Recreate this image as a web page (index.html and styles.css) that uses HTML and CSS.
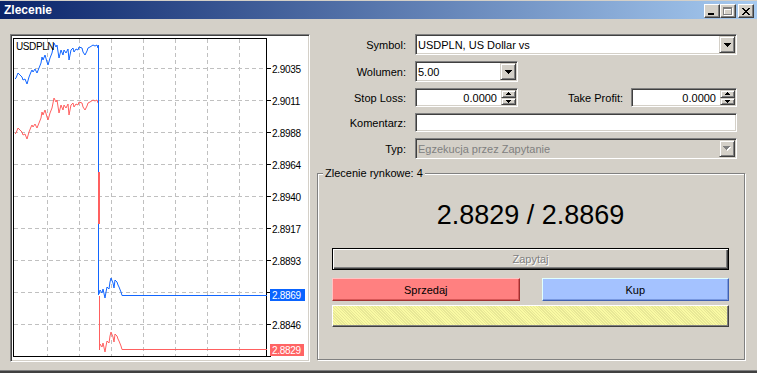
FILE: index.html
```html
<!DOCTYPE html>
<html>
<head>
<meta charset="utf-8">
<link rel="stylesheet" href="styles.css">
</head>
<body>
<div class="window">
  <div class="titlebar">
    <span class="title">Zlecenie</span>
    <div class="tb-buttons">
      <div class="tb-btn"><svg width="6" height="2" class="ico-min"><rect width="6" height="2" fill="#000"/></svg></div>
      <div class="tb-btn"><svg width="10" height="9" viewBox="0 0 10 9" shape-rendering="crispEdges"><path d="M1.5 1.5h8v7h-8z M1.5 2.5h8" fill="none" stroke="#fff"/><path d="M0.5 0.5h8v7h-8z M0.5 1.5h8" fill="none" stroke="#808080"/></svg></div>
      <div class="tb-btn tb-close"><svg width="8" height="7" viewBox="0 0 8 7" shape-rendering="crispEdges"><path d="M0 0h2v1h1v1h2v-1h1v-1h2v1h-1v1h-1v1h-1v1h1v1h1v1h1v1h-2v-1h-1v-1h-2v1h-1v1h-2v-1h1v-1h1v-1h1v-1h-1v-1h-1v-1h-1z" fill="#000"/></svg></div>
    </div>
  </div>
  <div class="content">
    <div class="chart-panel sunken">
      <svg class="chart" width="296" height="324" viewBox="12 36 296 324">
        <rect x="12" y="36" width="296" height="324" fill="#fff"/>
        <g stroke="#c0c0c0" stroke-dasharray="4 3" shape-rendering="crispEdges" fill="none">
          <path d="M47.5 39V356M79.5 39V356M111.5 39V356M143.5 39V356M175.5 39V356M207.5 39V356M239.5 39V356"/>
          <path d="M14 68.5H266M14 100.5H266M14 132.5H266M14 164.5H266M14 196.5H266M14 228.5H266M14 260.5H266M14 292.5H266M14 324.5H266"/>
        </g>
        <rect x="13.5" y="38.5" width="253" height="318" fill="none" stroke="#000" shape-rendering="crispEdges"/>
        <path d="M267 68.5h4M267 100.5h4M267 132.5h4M267 164.5h4M267 196.5h4M267 228.5h4M267 260.5h4M267 292.5h4M267 324.5h4M267 356.5h4" stroke="#000" shape-rendering="crispEdges"/>
        <g class="axis-txt">
          <text x="272" y="72.5">2.9035</text>
          <text x="272" y="104.5">2.9011</text>
          <text x="272" y="136.5">2.8988</text>
          <text x="272" y="168.5">2.8964</text>
          <text x="272" y="200.5">2.8940</text>
          <text x="272" y="232.5">2.8917</text>
          <text x="272" y="264.5">2.8893</text>
          <text x="272" y="328.5">2.8846</text>
        </g>
        <g fill="none" stroke-width="1">
          <g transform="translate(0,55)" stroke="#ff6060">
            <polyline points="15,79 16,78 18,73 20,75 22,77 23,80 25,79 27,84 29,77 31,72 32,70 33,72 35,69 37,73 39,68 41,63 42,57 43,60 45,55 47,62 48,65 50,58 52,53 53,48 54,43 56,47 57,45 59,58 61,50 63,55 64,50 66,53 68,49 69,60 71,50 73,48 74,52 76,49 78,50 79,47 82,48 83,52 85,55 87,51 88,48 90,47 93,45 95,46 97,45 98,48"/>
          </g>
          <g transform="translate(0,54)" stroke="#ff6060">
            <polyline points="99.5,294 100,290 102,293 103,289 105,298 106,292 107,287 109,289 110,282 111,278 113,283 114,288 115,280 117,282 118,285 119,287 121,292 122,295.5 267,295.5"/>
          </g>
          <line x1="99.5" y1="296" x2="99.5" y2="350" stroke="#ff6060"/>
          <polyline stroke="#1266ff" points="15,79 16,78 18,73 20,75 22,77 23,80 25,79 27,84 29,77 31,72 32,70 33,72 35,69 37,73 39,68 41,63 42,57 43,60 45,55 47,62 48,65 50,58 52,53 53,48 54,43 56,47 57,45 59,58 61,50 63,55 64,50 66,53 68,49 69,60 71,50 73,48 74,52 76,49 78,50 79,47 82,48 83,52 85,55 87,51 88,48 90,47 93,45 95,46 97,45 98,48 98.5,45"/>
          <line x1="98.5" y1="45" x2="98.5" y2="295" stroke="#1266ff"/>
          <polyline stroke="#1266ff" points="99,294 100,290 102,293 103,289 105,298 106,292 107,287 109,289 110,282 111,278 113,283 114,288 115,280 117,282 118,285 119,287 121,292 122,295.5 267,295.5"/>
          <rect x="98" y="172" width="2" height="52" fill="#ff6060" stroke="none"/>
        </g>
        <rect x="270" y="289" width="35" height="12" fill="#0a64ff"/>
        <text x="272" y="299" class="axis-txt lbl-white">2.8869</text>
        <rect x="270" y="344" width="34" height="12" fill="#ff6464"/>
        <text x="272" y="354" class="axis-txt lbl-white">2.8829</text>
        <text x="16" y="49.5" class="sym-txt">USDPLN</text>
      </svg>
    </div>
    <div class="form">
      <div class="fields">
        <div class="lbl">Symbol:</div>
        <div class="combo sunken span3"><span class="val">USDPLN, US Dollar vs</span><span class="btn raised"><svg width="7" height="4" shape-rendering="crispEdges"><path d="M0 0h7v1h-1v1h-1v1h-1v1h-1v-1h-1v-1h-1v-1h-1z" fill="#000"/></svg></span></div>

        <div class="lbl">Wolumen:</div>
        <div class="combo sunken"><span class="val">5.00</span><span class="btn raised"><svg width="7" height="4" shape-rendering="crispEdges"><path d="M0 0h7v1h-1v1h-1v1h-1v1h-1v-1h-1v-1h-1v-1h-1z" fill="#000"/></svg></span></div>
        <div></div><div></div>

        <div class="lbl">Stop Loss:</div>
        <div class="spin sunken"><span class="val num">0.0000</span><span class="spinbtns"><span class="sbtn raised"><svg width="5" height="3" shape-rendering="crispEdges"><path d="M2 0h1v1h1v1h1v1h-5v-1h1v-1h1z" fill="#000"/></svg></span><span class="sbtn raised"><svg width="5" height="3" shape-rendering="crispEdges"><path d="M0 0h5v1h-1v1h-1v1h-1v-1h-1v-1h-1z" fill="#000"/></svg></span></span></div>
        <div class="lbl lbl2">Take Profit:</div>
        <div class="spin sunken"><span class="val num">0.0000</span><span class="spinbtns"><span class="sbtn raised"><svg width="5" height="3" shape-rendering="crispEdges"><path d="M2 0h1v1h1v1h1v1h-5v-1h1v-1h1z" fill="#000"/></svg></span><span class="sbtn raised"><svg width="5" height="3" shape-rendering="crispEdges"><path d="M0 0h5v1h-1v1h-1v1h-1v-1h-1v-1h-1z" fill="#000"/></svg></span></span></div>

        <div class="lbl">Komentarz:</div>
        <div class="edit sunken span3"></div>

        <div class="lbl">Typ:</div>
        <div class="combo sunken span3 disabled"><span class="val">Egzekucja przez Zapytanie</span><span class="btn raised"><svg width="8" height="5" shape-rendering="crispEdges"><path d="M1 1h7v1h-1v1h-1v1h-1v1h-1v-1h-1v-1h-1v-1h-1z" fill="#fff"/><path d="M0 0h7v1h-1v1h-1v1h-1v1h-1v-1h-1v-1h-1v-1h-1z" fill="#808080"/></svg></span></div>
      </div>

      <fieldset class="group">
        <legend>Zlecenie rynkowe: 4</legend>
        <div class="price">2.8829 / 2.8869</div>
        <div class="zap"><span>Zapytaj</span></div>
        <div class="trade">
          <div class="sell">Sprzedaj</div>
          <div class="buy">Kup</div>
        </div>
        <div class="yellow"></div>
      </fieldset>
    </div>
  </div>
</div>
</body>
</html>
```
FILE: styles.css
```css
* { box-sizing: border-box; }
body {
  margin: 0;
  background: #d4d0c8;
  font-family: "Liberation Sans", Arial, sans-serif;
  font-size: 11px;
  color: #000;
}
.window {
  width: 757px;
  height: 373px;
  background: #d4d0c8;
  overflow: hidden;
  border-bottom: 2px solid #404040;
  box-shadow: inset 0 -1px #808080;
  border-top: 1px solid #d4d0c8;
}
.titlebar {
  height: 18px;
  background: linear-gradient(to right, #0a246a, #a6caf0);
  display: flex;
  align-items: flex-start;
  padding: 0 3px 0 3px;
}
.title {
  color: #fff;
  font-weight: bold;
  font-size: 12px;
  line-height: 18px;
  padding-left: 1px;
}
.tb-buttons {
  margin-left: auto;
  display: flex;
  padding-top: 3px;
}
.tb-btn {
  width: 16px;
  height: 14px;
  background: #d4d0c8;
  border: 1px solid;
  border-color: #fff #404040 #404040 #fff;
  box-shadow: inset -1px -1px #808080;
  display: flex;
  align-items: center;
  justify-content: center;
}
.tb-btn .ico-min { margin-top: 6px; margin-right: 2px; }
.tb-close { margin-left: 2px; }

.content {
  display: flex;
  padding: 15px 0 0 10px;
}
.sunken {
  border: 1px solid;
  border-color: #808080 #fff #fff #808080;
  box-shadow: inset 1px 1px #404040, inset -1px -1px #d4d0c8;
  padding: 1px;
}
.raised {
  background: #d4d0c8;
  border: 1px solid;
  border-color: #d4d0c8 #404040 #404040 #d4d0c8;
  box-shadow: inset 1px 1px #fff, inset -1px -1px #808080;
}
.chart-panel {
  width: 300px;
  height: 328px;
  background: #fff;
}
.chart { display: block; }
.axis-txt {
  font-family: "Liberation Sans", Arial, sans-serif;
  font-size: 10px;
  letter-spacing: -0.3px;
  fill: #000;
}
.lbl-white { fill: #fff; }
.sym-txt {
  font-family: "Liberation Sans", Arial, sans-serif;
  font-size: 10px;
  letter-spacing: -0.4px;
  fill: #000;
}

.form {
  margin-left: 7px;
  width: 428px;
}
.fields {
  display: grid;
  grid-template-columns: 98px 103px 113px 106px;
  grid-template-rows: 21px 21px 19px 19px 21px;
  row-gap: 6px;
  align-items: stretch;
}
.lbl {
  text-align: right;
  padding-right: 9px;
  align-self: center;
}
.lbl2 { padding-right: 8px; }
.span3 { grid-column: 2 / 5; }
.combo, .spin, .edit {
  background: #fff;
  display: flex;
  align-items: stretch;
  overflow: hidden;
}
.val {
  flex: 1;
  padding-left: 1px;
  display: flex;
  align-items: center;
  white-space: nowrap;
}
.val.num {
  justify-content: flex-end;
  padding-right: 4px;
}
.btn {
  width: 16px;
  display: flex;
  align-items: center;
  justify-content: center;
}
.btn svg { display: block; }
.disabled { background: #d4d0c8; }
.disabled .val { color: #808080; }
.spinbtns {
  width: 15px;
  display: flex;
  flex-direction: column;
}
.sbtn {
  flex: 1;
  display: flex;
  align-items: center;
  justify-content: center;
}
.sbtn svg { display: block; }

.group {
  margin: 8px 0 0 0;
  padding: 0 15px 32px 14px;
  border: 1px solid #808080;
  box-shadow: inset 1px 1px #fff, 1px 1px #fff;
  width: 428px;
  min-width: 0;
}
.group legend {
  padding: 0 2px;
  margin-left: -9px;
  background: #d4d0c8;
  line-height: 13px;
}
.price {
  text-align: center;
  font-size: 27px;
  height: 60px;
  line-height: 60px;
  margin-top: 5px;
}
.zap {
  height: 22px;
  border: 1px solid #000;
  box-shadow: inset 1px 1px #fff, inset -1px -1px #404040, inset -2px -2px #808080;
  display: flex;
  align-items: center;
  justify-content: center;
  color: #808080;
  text-shadow: 1px 1px #fff;
  margin-top: 3px;
}
.trade {
  display: flex;
  gap: 22px;
  margin-top: 8px;
}
.sell, .buy {
  flex: 1;
  height: 23px;
  display: flex;
  align-items: center;
  justify-content: center;
  border: 1px solid;
}
.sell {
  background: #ff8080;
  border-color: #ffc4c4 #a03030 #a03030 #ffc4c4;
  box-shadow: inset -1px -1px #d85858;
}
.buy {
  background: #a4c2ff;
  border-color: #e0ffff #4060b0 #4060b0 #e0ffff;
  box-shadow: inset -1px -1px #7898e0;
}
.yellow {
  height: 22px;
  margin-top: 4px;
  border: 1px solid;
  border-color: #fff #404040 #404040 #fff;
  box-shadow: inset -1px -1px #808080;
  background-color: #f2f29a;
  background-image: repeating-linear-gradient(45deg, rgba(255,255,170,0.6) 0 1px, rgba(200,200,140,0.25) 1px 2px);
}
```
